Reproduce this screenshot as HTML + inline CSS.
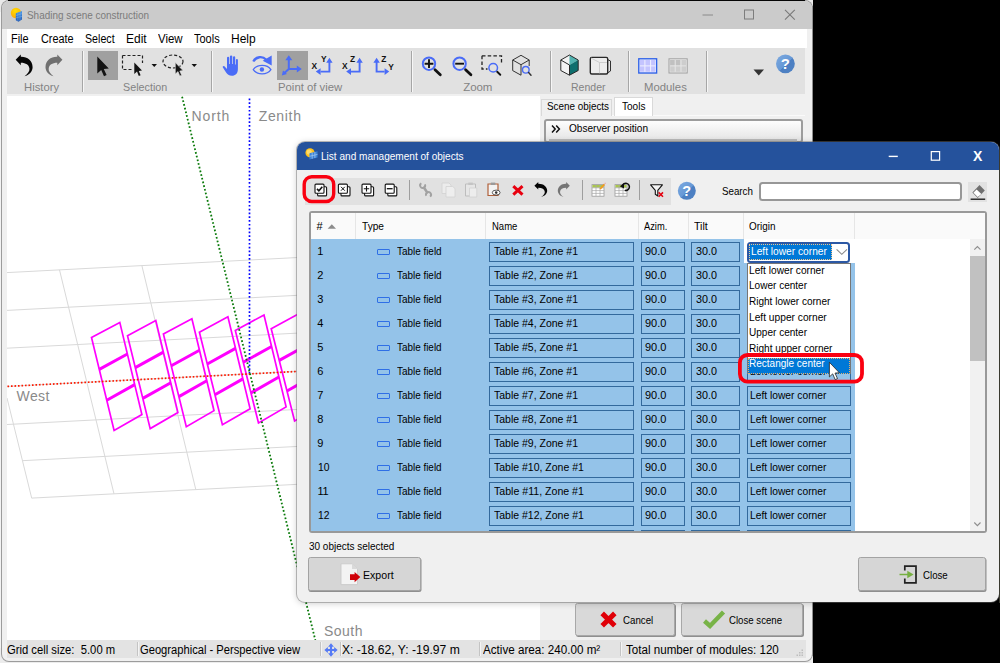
<!DOCTYPE html>
<html>
<head>
<meta charset="utf-8">
<title>Shading scene construction</title>
<style>
html,body{margin:0;padding:0;}
body{width:1000px;height:663px;overflow:hidden;position:relative;background:#000;font-family:"Liberation Sans",sans-serif;font-size:11px;color:#000;}
.abs{position:absolute;}
.t{position:absolute;white-space:pre;line-height:1;}
svg{position:absolute;overflow:visible;}
</style>
</head>
<body>
<div class="abs" style="left:0px;top:0px;width:2px;height:663px;background:#f3f3f3;"></div>
<div class="abs" style="left:0px;top:648px;width:812.5px;height:15px;background:#ececec;"></div>
<div class="abs" style="left:0px;top:0px;width:813px;height:12px;background:#e9e9e9;"></div>
<div class="abs" style="left:1.5px;top:1px;width:810.3px;height:660px;background:#f0f0f0;border-radius:7px;box-shadow:0 0 0 1px #9c9c9c;overflow:hidden;"></div>
<div class="abs" style="left:1.5px;top:1px;width:810.3px;height:28px;background:#cbcbcb;border-radius:7px 7px 0 0;"></div>
<div class="abs" style="left:8px;top:0px;width:797px;height:1.2px;background:#050505;"></div>
<div class="abs" style="left:811.6px;top:6px;width:1.4px;height:650px;background:#8f8f8f;"></div>
<svg style="left:9px;top:6px" width="16" height="17" viewBox="9 6 16 17">
<defs><radialGradient id="sun" cx="0.45" cy="0.3" r="0.75"><stop offset="0" stop-color="#ffe000"/><stop offset="1" stop-color="#ffa50a"/></radialGradient>
<linearGradient id="pan" x1="0" y1="0" x2="0" y2="1"><stop offset="0" stop-color="#4a9ae8"/><stop offset="1" stop-color="#1f55b0"/></linearGradient></defs>
<circle cx="16" cy="13" r="5.200" fill="url(#sun)"/>
<path d="M15.800 13.300 L22 10.900 V19.600 L18.500 21.700 L15.800 20.200 Z" fill="url(#pan)"/>
<path d="M15.800 15.600 L22 13.600 M15.800 17.900 L22 16.400 M17.900 12.500 V21.300 M20 11.700 V20.800" stroke="#8fc0f0" stroke-width="0.500" fill="none" opacity="0.8"/>
</svg>
<div class="t" style="left:26.5px;top:9.8px;font-size:11px;color:#7b7b7b;transform:scaleX(0.9027);transform-origin:0 0;">Shading scene construction</div>
<svg style="left:691px;top:0" width="121" height="30" viewBox="0 0 121 30">
<path d="M11.500 15 H22" stroke="#8a8a8a" stroke-width="1" fill="none"/>
<rect x="53.500" y="10" width="9" height="9" stroke="#7d7d7d" stroke-width="1" fill="none"/>
<path d="M94 9.800 L103.800 19.600 M103.800 9.800 L94 19.600" stroke="#7a7a7a" stroke-width="1.100" fill="none"/>
</svg>
<div class="abs" style="left:7px;top:29px;width:800px;height:19px;background:#fff;"></div>
<div class="t" style="left:11px;top:33px;font-size:12.5px;color:#000;transform:scaleX(0.8750);transform-origin:0 0;">File</div>
<div class="t" style="left:41px;top:33px;font-size:12.5px;color:#000;transform:scaleX(0.8696);transform-origin:0 0;">Create</div>
<div class="t" style="left:85px;top:33px;font-size:12.5px;color:#000;transform:scaleX(0.8527);transform-origin:0 0;">Select</div>
<div class="t" style="left:126px;top:33px;font-size:12.5px;color:#000;transform:scaleX(0.9575);transform-origin:0 0;">Edit</div>
<div class="t" style="left:158px;top:33px;font-size:12.5px;color:#000;transform:scaleX(0.9165);transform-origin:0 0;">View</div>
<div class="t" style="left:194px;top:33px;font-size:12.5px;color:#000;transform:scaleX(0.8781);transform-origin:0 0;">Tools</div>
<div class="t" style="left:231px;top:33px;font-size:12.5px;color:#000;transform:scaleX(0.9579);transform-origin:0 0;">Help</div>
<div class="abs" style="left:7px;top:48px;width:798px;height:46px;background:#e1e1e1;"></div>
<div class="abs" style="left:81.5px;top:51px;width:1px;height:41px;background:#a6a6a6;"></div>
<div class="abs" style="left:82.5px;top:51px;width:1px;height:41px;background:#f6f6f6;"></div>
<div class="abs" style="left:210.5px;top:51px;width:1px;height:41px;background:#a6a6a6;"></div>
<div class="abs" style="left:211.5px;top:51px;width:1px;height:41px;background:#f6f6f6;"></div>
<div class="abs" style="left:410.5px;top:51px;width:1px;height:41px;background:#a6a6a6;"></div>
<div class="abs" style="left:411.5px;top:51px;width:1px;height:41px;background:#f6f6f6;"></div>
<div class="abs" style="left:549.5px;top:51px;width:1px;height:41px;background:#a6a6a6;"></div>
<div class="abs" style="left:550.5px;top:51px;width:1px;height:41px;background:#f6f6f6;"></div>
<div class="abs" style="left:628px;top:51px;width:1px;height:41px;background:#a6a6a6;"></div>
<div class="abs" style="left:629px;top:51px;width:1px;height:41px;background:#f6f6f6;"></div>
<div class="abs" style="left:706px;top:51px;width:1px;height:41px;background:#a6a6a6;"></div>
<div class="abs" style="left:707px;top:51px;width:1px;height:41px;background:#f6f6f6;"></div>
<div class="t" style="left:23.5px;top:81.55px;font-size:11.5px;color:#838383;transform:scaleX(0.9792);transform-origin:0 0;">History</div>
<div class="t" style="left:122.8px;top:81.55px;font-size:11.5px;color:#838383;transform:scaleX(0.9350);transform-origin:0 0;">Selection</div>
<div class="t" style="left:277.6px;top:81.55px;font-size:11.5px;color:#838383;transform:scaleX(0.9852);transform-origin:0 0;">Point of view</div>
<div class="t" style="left:463.3px;top:81.55px;font-size:11.5px;color:#838383;letter-spacing:-0.099px;">Zoom</div>
<div class="t" style="left:570.5px;top:81.55px;font-size:11.5px;color:#838383;transform:scaleX(0.9156);transform-origin:0 0;">Render</div>
<div class="t" style="left:644.2px;top:81.55px;font-size:11.5px;color:#838383;transform:scaleX(0.9854);transform-origin:0 0;">Modules</div>
<div class="abs" style="left:87.5px;top:51px;width:30.5px;height:29px;background:#a0a0a0;"></div>
<div class="abs" style="left:277px;top:51px;width:30.5px;height:29px;background:#a0a0a0;"></div>
<svg style="left:1px;top:48px" width="811" height="46" viewBox="1 48 811 46">
    <!-- undo -->
    <path d="M15.700 59.800 L20.800 54.400 L20.800 56.800 C27 56.500 32.600 60.500 32.600 67.200 C32.600 71.500 29 75 24.600 76.200 C28 73.500 29.800 71 29.400 68.500 C29 65 26 62.800 20.800 62.800 L20.800 65.300 Z" fill="#050505"/>
    <!-- redo -->
    <path d="M15.700 59.800 L20.800 54.400 L20.800 56.800 C27 56.500 32.600 60.500 32.600 67.200 C32.600 71.500 29 75 24.600 76.200 C28 73.500 29.800 71 29.400 68.500 C29 65 26 62.800 20.800 62.800 L20.800 65.300 Z" fill="#707070" transform="translate(78.100 0) scale(-1 1)"/>
    <!-- arrow cursor -->
    <path d="M97.3 56.5 L97.3 73.5 L101.2 70 L104 76.3 L106.6 75.1 L103.8 69 L108.8 68.6 Z" fill="#141414"/>
    <!-- rect select -->
    <path d="M122.5 55.5 H142.5 V63 M122.5 55.5 V69.5 H133" stroke="#222" stroke-width="1.2" stroke-dasharray="3 2" fill="none"/>
    <path d="M134.3 62.5 L134.3 74 L137 71.6 L138.8 76 L140.6 75.2 L138.8 71 L142 70.6 Z" fill="#141414"/>
    <path d="M151.5 64 H157 L154.25 67 Z" fill="#111"/>
    <!-- lasso -->
    <ellipse cx="173" cy="61.5" rx="10" ry="6.5" stroke="#222" stroke-width="1.2" stroke-dasharray="3 2" fill="none"/>
    <rect x="172" y="62" width="12" height="14" fill="#e1e1e1" opacity="0"/>
    <path d="M175.3 62.5 L175.3 74 L178 71.6 L179.8 76 L181.6 75.2 L179.8 71 L183 70.6 Z" fill="#141414" stroke="#e1e1e1" stroke-width="0.6"/>
    <path d="M191.5 64 H197 L194.25 67 Z" fill="#111"/>
    <!-- hand -->
    <path d="M227 57.900 a1.100 1.100 0 0 1 2.200 0 V64 h0.700 V56.600 a1.200 1.200 0 0 1 2.400 0 V64 h0.700 V57.300 a1.100 1.100 0 0 1 2.200 0 V64.500 h0.700 V60 a1 1 0 0 1 2 0 V69 c0 4.500 -2.500 6.800 -6 6.800 c-3 0 -4.600 -1.400 -5.800 -3.200 l-3.200 -5 c-0.700 -1.200 0.700 -2.200 1.700 -1.200 l2.400 2.600 Z" fill="#4a6cf7"/>
    <!-- eye -->
    <path d="M253.300 69.600 C257 64 267.200 64 270.900 69.600 C267.200 75.200 257 75.200 253.300 69.600 Z" fill="none" stroke="#4a6cf7" stroke-width="1.300"/>
    <circle cx="261.900" cy="69.500" r="2.200" fill="#4a6cf7"/>
    <path d="M253.300 61.500 C256 56.500 262.500 55.800 266 59.500" fill="none" stroke="#4a6cf7" stroke-width="2.300"/>
    <path d="M271.700 55.400 L271.700 65.600 L262.700 60.800 Z" fill="#4a6cf7"/>
    <!-- 3-axes -->
    <path d="M288.800 58.500 V69 H298 M288.800 69 L283.800 73.600" stroke="#4a6cf7" stroke-width="2" fill="none"/>
    <path d="M288.800 55.200 L292.300 60.200 H285.300 Z M301.800 69 L296.800 65.500 V72.500 Z M281.800 75.400 L283 70.400 L287 74.100 Z" fill="#4a6cf7"/>
    <!-- xY -->
    <path d="M329.4 62 V71.600 H320.6" stroke="#4a6cf7" stroke-width="1.900" fill="none"/>
    <path d="M329.4 57.800 L332.59999999999997 62.800 H326.2 Z M315.8 71.600 L320.6 68.300 V74.900 Z" fill="#4a6cf7"/>
    <text x="311.4" y="68.7" font-family="Liberation Sans" font-weight="bold" font-size="8.400" fill="#111">X</text>
    <text x="320.9" y="61.5" font-family="Liberation Sans" font-weight="bold" font-size="8.400" fill="#111">Y</text>
    <!-- xZ -->
    <path d="M359.6 62 V71.600 H351" stroke="#4a6cf7" stroke-width="1.900" fill="none"/>
    <path d="M359.6 57.800 L362.8 62.800 H356.40000000000003 Z M346.2 71.600 L351 68.300 V74.900 Z" fill="#4a6cf7"/>
    <text x="342" y="68.7" font-family="Liberation Sans" font-weight="bold" font-size="8.400" fill="#111">X</text>
    <text x="349.9" y="61.5" font-family="Liberation Sans" font-weight="bold" font-size="8.400" fill="#111">Z</text>
    <!-- ZY -->
    <path d="M376.6 62 V71.600 H384.6" stroke="#4a6cf7" stroke-width="1.900" fill="none"/>
    <path d="M376.6 57.800 L379.8 62.800 H373.40000000000003 Z M389.2 71.600 L384.6 68.300 V74.900 Z" fill="#4a6cf7"/>
    <text x="381.2" y="61.5" font-family="Liberation Sans" font-weight="bold" font-size="8.400" fill="#111">Z</text>
    <text x="388.2" y="69.5" font-family="Liberation Sans" font-weight="bold" font-size="8.400" fill="#111">Y</text>
    <!-- zoom in -->
    <circle cx="429" cy="63.700" r="6.200" fill="none" stroke="#4a6cf7" stroke-width="2"/>
    <path d="M424.600 63.700 H433.400 M429 59.300 V68.100" stroke="#111" stroke-width="1.900"/>
    <path d="M435 69.800 L440.300 74.800" stroke="#111" stroke-width="2.800" stroke-linecap="round"/>
    <!-- zoom out -->
    <circle cx="459.600" cy="63.700" r="6.200" fill="none" stroke="#4a6cf7" stroke-width="2"/>
    <path d="M455.200 63.700 H464" stroke="#111" stroke-width="1.900"/>
    <path d="M465.600 69.800 L470.900 74.800" stroke="#111" stroke-width="2.800" stroke-linecap="round"/>
    <!-- zoom rect -->
    <path d="M482 55.800 H501.500 V64 M482 55.800 V69 H487.500" stroke="#222" stroke-width="1.300" stroke-dasharray="3.500 2.200" fill="none"/>
    <circle cx="493.200" cy="67.800" r="4.300" fill="#e1e1e1" stroke="#4a6cf7" stroke-width="1.500"/>
    <path d="M497.200 71.800 L500.300 74.800" stroke="#111" stroke-width="1.900" stroke-linecap="round"/>
    <!-- zoom cube -->
    <path d="M512.700 60 L521 55.300 L529.200 60 V66 M512.700 60 V70.600 L521 75.200 V64.700 L512.700 60 M521 64.700 L529.200 60" stroke="#333" stroke-width="1" fill="none"/>
    <circle cx="525.800" cy="69.800" r="3.300" fill="#e1e1e1" stroke="#4a6cf7" stroke-width="1.400"/>
    <path d="M528.600 72.600 L531 75.200" stroke="#333" stroke-width="1.500" stroke-linecap="round"/>
    <!-- render cube -->
    <path d="M569.500 55 L560.800 60 V70.500 L569.500 75.200 Z" fill="#f3f3f3"/>
    <path d="M569.500 55 L578.200 60 L569.500 65 Z" fill="#52b3b0"/>
    <path d="M569.500 65 L578.200 60 V70.500 L569.500 75.200 Z" fill="#0e6f6e"/>
    <path d="M569.500 55 L578.200 60 V70.500 L569.500 75.200 L560.800 70.500 V60 Z M560.800 60 L569.500 65 V75.200" stroke="#2a2a2a" stroke-width="1" fill="none" stroke-linejoin="round"/>
    <!-- wire box -->
    <path d="M607.500 59.500 L610.500 61 V71 L607.500 73" fill="#e4e4e4" stroke="#333" stroke-width="1"/>
    <rect x="590.300" y="57.400" width="17.400" height="16.600" rx="1.500" fill="#ededed" stroke="#2a2a2a" stroke-width="1.400"/>
    <path d="M591 58 L599.500 62.500 V73.300 M599.500 62.500 H607" stroke="#c9c9c9" stroke-width="0.900" fill="none"/>
    <!-- modules -->
    <rect x="638.800" y="58.800" width="17.800" height="14.200" fill="#fff" stroke="#2f62e8" stroke-width="1.400"/>
    <rect x="640" y="60" width="15.400" height="11.800" fill="#c4c4ff"/>
    <path d="M644.900 60 V71.800 M650.600 60 V71.800 M640 65.900 H655.400" stroke="#f0f0ff" stroke-width="1"/>
    <rect x="669" y="58.800" width="18.200" height="14.200" fill="#ebebeb" stroke="#a0a0a0" stroke-width="1"/>
    <rect x="670.200" y="60" width="15.800" height="11.800" fill="#cdcdcd"/>
    <rect x="670.200" y="60" width="10" height="5.400" fill="#c0c0c0"/>
    <path d="M675.200 60 V71.800 M681 60 V71.800 M670.200 65.900 H686" stroke="#e6e6e6" stroke-width="1"/>
    <!-- dropdown -->
    <path d="M753.500 69.500 H764 L758.750 75.500 Z" fill="#333"/>
    <!-- help -->
    <defs><linearGradient id="hg" x1="0" y1="0" x2="1" y2="1"><stop offset="0" stop-color="#7daae0"/><stop offset="0.520" stop-color="#6698d6"/><stop offset="0.550" stop-color="#4c7fc2"/><stop offset="1" stop-color="#4f82c4"/></linearGradient></defs>
    <circle cx="785.400" cy="63.800" r="9.400" fill="url(#hg)"/>
    <text x="785.400" y="69.300" text-anchor="middle" font-family="Liberation Sans" font-weight="bold" font-size="15" fill="#fff">?</text>
</svg>
<div class="abs" style="left:7px;top:96px;width:533px;height:544px;background:#fff;"></div>
<svg style="left:0;top:0" width="1000" height="663" viewBox="0 0 1000 663"><defs><clipPath id="vclip"><rect x="7" y="96" width="533" height="544"/></clipPath></defs><g clip-path="url(#vclip)"><path d="M7.0 272.6 L300 257.4 M7.0 310.4 L300 295.2 M7.0 348.2 L300 333.0 M7.0 386.4 L300 371.2 M7.0 424.5 L300 409.3 M22.2 460.7 L300 446.3 M31.7 498.1 L300 484.2 M7 398 L31.7 498.1 M59.5 269.9 L114 493.9 M141.9 265.7 L195.8 489.6" stroke="#d9d9d9" stroke-width="1" fill="none"/><path d="M91.5 337.5 L119.8 322.4 L141.9 414.5 L114.1 430.5 Z M127.5 335.8 L155.8 320.5 L177.9 412.6 L150.2 428.6 Z M163.4 334.0 L191.9 318.7 L214.0 410.7 L186.3 426.7 Z M199.4 332.2 L227.9 316.8 L250.1 408.8 L222.4 424.8 Z M235.3 330.5 L264.0 315.0 L286.1 406.9 L258.5 422.9 Z M271.2 328.8 L300.1 313.1 L322.1 405.0 L294.6 421.0 Z M307.2 327.0 L336.1 311.3 L358.2 403.1 L330.7 419.1 Z" stroke="#ff00ff" stroke-width="1.7" fill="none" stroke-linejoin="miter"/><path d="M99.3 369.4 L127.4 354.0 M106.8 400.3 L134.7 384.6 M135.3 367.6 L163.4 352.1 M142.8 398.4 L170.8 382.7 M171.3 365.8 L199.5 350.3 M178.9 396.6 L206.8 380.8 M207.3 364.0 L235.5 348.4 M214.9 394.7 L242.9 378.9 M243.3 362.2 L271.6 346.5 M251.0 392.9 L278.9 377.0 M279.3 360.4 L307.6 344.7 M287.0 391.0 L315.0 375.1 M315.3 358.6 L343.7 342.8 M323.1 389.2 L351.0 373.3" stroke="#ff00ff" stroke-width="3" fill="none"/><path d="M7.5 386.4 L300 371.3" stroke="#ff1a00" stroke-width="1.7" stroke-dasharray="1.6 1.9" fill="none"/><path d="M249.5 98.5 V373" stroke="#0000ff" stroke-width="1.7" stroke-dasharray="1.7 2.1" fill="none"/><path d="M182.1 96.7 L316.5 645" stroke="#0a7a0a" stroke-width="1.8" stroke-dasharray="1.7 2.1" fill="none"/></g></svg>
<div class="t" style="left:191.6px;top:109.3px;font-size:14px;color:#8a8a8a;letter-spacing:0.893px;">North</div>
<div class="t" style="left:258.7px;top:109.3px;font-size:14px;color:#8a8a8a;letter-spacing:0.665px;">Zenith</div>
<div class="t" style="left:16.6px;top:389.3px;font-size:14px;color:#8a8a8a;letter-spacing:0.391px;">West</div>
<div class="t" style="left:324px;top:624.3px;font-size:14px;color:#8a8a8a;letter-spacing:0.463px;">South</div>
<div class="abs" style="left:540px;top:96px;width:265px;height:544px;background:#f0f0f0;"></div>
<div class="abs" style="left:541px;top:115px;width:264px;height:1px;background:#fafafa;"></div>
<div class="abs" style="left:541px;top:99px;width:71px;height:17px;background:#f0f0f0;border:1px solid #d9d9d9;border-bottom:none;box-sizing:border-box;"></div>
<div class="t" style="left:546.8px;top:100.55px;font-size:11.5px;color:#000;transform:scaleX(0.8587);transform-origin:0 0;">Scene objects</div>
<div class="abs" style="left:614px;top:97px;width:38.5px;height:19px;background:#fff;border:1px solid #d9d9d9;border-bottom:none;box-sizing:border-box;"></div>
<div class="t" style="left:621.8px;top:100.55px;font-size:11.5px;color:#000;transform:scaleX(0.8729);transform-origin:0 0;">Tools</div>
<div class="abs" style="left:543.5px;top:119px;width:259px;height:24px;background:linear-gradient(#fdfdfd,#e4e4e4);border:2px solid #9c9c9c;border-radius:3px;box-sizing:border-box;"></div>
<div class="abs" style="left:549px;top:139px;width:248px;height:3px;background:#b9b9b9;"></div>
<svg style="left:551px;top:124px" width="10" height="10" viewBox="0 0 10 10"><path d="M1 1.500 L4.200 5 L1 8.500 M5.200 1.500 L8.400 5 L5.200 8.500" stroke="#111" stroke-width="1.5" fill="none"/></svg>
<div class="t" style="left:568.6px;top:122.55px;font-size:11.5px;color:#000;transform:scaleX(0.8769);transform-origin:0 0;">Observer position</div>
<div class="abs" style="left:575px;top:603px;width:99.5px;height:32.5px;background:#d9d9d9;border:1px solid #a8a8a8;border-radius:2.5px;box-sizing:border-box;box-shadow:1px 1px 0 #8f8f8f;"></div>
<svg style="left:600px;top:611px" width="17" height="17" viewBox="0 0 17 17"><path d="M2.200 2.400 L14.800 14.800 M14.800 2.400 L2.200 14.800" stroke="#e00008" stroke-width="5" fill="none"/></svg>
<div class="t" style="left:622.9px;top:614.55px;font-size:11.5px;color:#000;transform:scaleX(0.8446);transform-origin:0 0;">Cancel</div>
<div class="abs" style="left:680.5px;top:603px;width:122px;height:32.5px;background:#d9d9d9;border:1px solid #a8a8a8;border-radius:2.5px;box-sizing:border-box;box-shadow:1px 1px 0 #8f8f8f;"></div>
<svg style="left:703px;top:610px" width="23" height="19" viewBox="0 0 23 19"><path d="M1.500 11 L7 16 L20.500 2" stroke="#78b347" stroke-width="4.400" fill="none"/></svg>
<div class="t" style="left:729.1px;top:614.55px;font-size:11.5px;color:#000;transform:scaleX(0.8380);transform-origin:0 0;">Close scene</div>
<div class="abs" style="left:7px;top:640px;width:799px;height:17.5px;background:#e3e3e3;"></div>
<div class="abs" style="left:136.5px;top:642px;width:1px;height:14px;background:#c4c4c4;"></div>
<div class="abs" style="left:137.5px;top:642px;width:1px;height:14px;background:#f4f4f4;"></div>
<div class="abs" style="left:319.5px;top:642px;width:1px;height:14px;background:#c4c4c4;"></div>
<div class="abs" style="left:320.5px;top:642px;width:1px;height:14px;background:#f4f4f4;"></div>
<div class="abs" style="left:339.5px;top:642px;width:1px;height:14px;background:#c4c4c4;"></div>
<div class="abs" style="left:340.5px;top:642px;width:1px;height:14px;background:#f4f4f4;"></div>
<div class="abs" style="left:479px;top:642px;width:1px;height:14px;background:#c4c4c4;"></div>
<div class="abs" style="left:480px;top:642px;width:1px;height:14px;background:#f4f4f4;"></div>
<div class="abs" style="left:620px;top:642px;width:1px;height:14px;background:#c4c4c4;"></div>
<div class="abs" style="left:621px;top:642px;width:1px;height:14px;background:#f4f4f4;"></div>
<div class="t" style="left:7.3px;top:644.05px;font-size:12.5px;color:#000;transform:scaleX(0.8997);transform-origin:0 0;">Grid cell size:  5.00 m</div>
<div class="t" style="left:140.2px;top:644.05px;font-size:12.5px;color:#000;transform:scaleX(0.8933);transform-origin:0 0;">Geographical - Perspective view</div>
<svg style="left:323.5px;top:642.5px" width="14" height="14" viewBox="0 0 12 12"><path d="M6 0.300 L8.500 3.300 H6.900 V5.100 H8.700 V3.500 L11.700 6 L8.700 8.500 V6.900 H6.900 V8.700 H8.500 L6 11.700 L3.500 8.700 H5.100 V6.900 H3.300 V8.500 L0.300 6 L3.300 3.500 V5.100 H5.100 V3.300 H3.500 Z" fill="#557af5"/></svg>
<div class="t" style="left:342.4px;top:644.05px;font-size:12.5px;color:#000;transform:scaleX(0.9700);transform-origin:0 0;">X: -18.62, Y: -19.97 m</div>
<div class="t" style="left:483.3px;top:644.05px;font-size:12.5px;color:#000;transform:scaleX(0.9322);transform-origin:0 0;">Active area: 240.00 m²</div>
<div class="t" style="left:625.9px;top:644.05px;font-size:12.5px;color:#000;transform:scaleX(0.9280);transform-origin:0 0;">Total number of modules: 120</div>
<svg style="left:796px;top:649px" width="8" height="8" viewBox="0 0 8 8"><path d="M5.500 0.500h1.500v1.500h-1.500z M5.500 3h1.500v1.500h-1.500z M3 3h1.500v1.500h-1.500z M5.500 5.500h1.500v1.500h-1.500z M3 5.500h1.500v1.500h-1.500z M0.500 5.500h1.500v1.500h-1.500z" fill="#bdbdbd"/></svg>
<div class="abs" style="left:296.5px;top:141.5px;width:702.0px;height:460.79999999999995px;background:#f0f0f0;border-radius:8px;box-shadow:0 0 0 1px rgba(110,110,110,.45),0 1px 7px rgba(0,0,0,.22);overflow:hidden;"></div>
<div class="abs" style="left:296.5px;top:141.5px;width:702.0px;height:28px;background:#25529c;border-radius:8px 8px 0 0;"></div>
<div class="abs" style="left:999.3px;top:150px;width:1px;height:453px;background:#3a3a30;"></div>
<svg style="left:304.5px;top:148px" width="13" height="12" viewBox="0 0 13 12">
<circle cx="5" cy="4.800" r="4.600" fill="#ffc21a"/><circle cx="4.200" cy="4" r="2.600" fill="#ffdc6a"/>
<path d="M4.500 5.200 L12.500 3.300 V9.500 L4.500 11.400 Z" fill="#3b82d6"/>
<path d="M4.500 8.300 L12.500 6.400 M7.200 4.600 V10.800 M9.900 3.900 V10.100" stroke="#a9cdf3" stroke-width="0.7" fill="none"/>
</svg>
<div class="t" style="left:320.9px;top:150.55px;font-size:11.5px;color:#fff;transform:scaleX(0.8744);transform-origin:0 0;">List and management of objects</div>
<svg style="left:880px;top:142px" width="118" height="28" viewBox="880 142 118 28">
<path d="M888.700 156.400 H897.800" stroke="#fff" stroke-width="1.4" fill="none"/>
<rect x="931.300" y="151.600" width="8.300" height="8.600" stroke="#fff" stroke-width="1.200" fill="none"/>
</svg>
<div class="t" style="left:973.1px;top:149.3px;font-size:14px;color:#fff;letter-spacing:0.562px;font-weight:bold;">X</div>
<div class="abs" style="left:305px;top:178px;width:365.5px;height:26.5px;background:#e1e1e1;"></div>
<div class="abs" style="left:408.5px;top:180px;width:1.3px;height:19.5px;background:#9e9e9e;"></div>
<div class="abs" style="left:581.5px;top:180px;width:1.3px;height:19.5px;background:#9e9e9e;"></div>
<div class="abs" style="left:639.2px;top:180px;width:1.3px;height:19.5px;background:#9e9e9e;"></div>
<svg style="left:300px;top:172px" width="400" height="36" viewBox="300 172 400 36">
<!-- stacked box icons -->
<g fill="#fff" stroke="#111" stroke-width="1.100">
<rect x="317.600" y="186.700" width="9" height="9.200" rx="1"/><rect x="315" y="184.100" width="9" height="9.200" rx="1"/>
<rect x="341" y="186.700" width="9" height="9.200" rx="1"/><rect x="338.400" y="184.100" width="9" height="9.200" rx="1"/>
<rect x="364.600" y="186.700" width="9" height="9.200" rx="1"/><rect x="362" y="184.100" width="9" height="9.200" rx="1"/>
<rect x="387.800" y="186.700" width="9" height="9.200" rx="1"/><rect x="385.200" y="184.100" width="9" height="9.200" rx="1"/>
</g>
<path d="M317 188.900 L318.900 190.800 L322.300 186.800" stroke="#111" stroke-width="1.600" fill="none"/>
<path d="M341 186.800 L344.800 190.700 M344.800 186.800 L341 190.700" stroke="#111" stroke-width="1" fill="none"/>
<path d="M363.800 188.700 H369.200 M366.500 186 V191.500" stroke="#111" stroke-width="1.100" fill="none"/>
<path d="M386.800 188.700 H392.600" stroke="#111" stroke-width="1.300" fill="none"/>
<!-- wrench (disabled) -->
<path d="M423.400 186.800 L427.800 193.400" stroke="#a2a2a2" stroke-width="2.600" fill="none"/>
<path d="M421.300 183.300 A2.500 2.500 0 1 0 424.900 184.400" stroke="#a2a2a2" stroke-width="1.900" fill="none"/>
<path d="M430 196.600 A2.500 2.500 0 1 0 426.300 195.700" stroke="#a2a2a2" stroke-width="1.900" fill="none"/>
<!-- copy (disabled) -->
<path d="M442 183 H449 L451 185 V193.500 H442 Z" fill="#ececec" stroke="#d2d2d2" stroke-width="0.800"/>
<path d="M446 186.500 H452.800 L455 188.700 V197 H446 Z" fill="#eeeeee" stroke="#d2d2d2" stroke-width="0.800"/>
<!-- paste (disabled) -->
<path d="M465.500 184 H475.500 V196 H465.500 Z" fill="#e6e6e6" stroke="#bdbdbd" stroke-width="1"/>
<rect x="468.300" y="182.600" width="4.500" height="2.400" fill="#c4c4c4"/>
<path d="M469.500 188 H476.800 V197 H469.500 Z" fill="#ededed" stroke="#cfcfcf" stroke-width="0.700"/>
<!-- paste special -->
<path d="M488 184 H498 V195.500 H488 Z" fill="#f3f3f3" stroke="#b0603a" stroke-width="1.200"/>
<rect x="490.800" y="182.600" width="4.500" height="2.400" fill="#9a9a9a"/>
<ellipse cx="496.200" cy="192.600" rx="3.900" ry="2.500" fill="#fff" stroke="#444" stroke-width="0.900"/>
<circle cx="496.200" cy="192.600" r="1.300" fill="#333"/>
<!-- red x -->
<path d="M513.300 186.200 L522.500 194.700 M522.500 186.200 L513.300 194.700" stroke="#e8000f" stroke-width="3" fill="none"/>
<!-- undo -->
<path d="M15.700 59.800 L20.800 54.400 L20.800 56.800 C27 56.500 32.600 60.500 32.600 67.200 C32.600 71.500 29 75 24.600 76.200 C28 73.500 29.800 71 29.400 68.500 C29 65 26 62.800 20.800 62.800 L20.800 65.300 Z" fill="#050505" transform="translate(522.509 144.569) scale(0.7574 0.6881)"/>
<!-- redo -->
<path d="M15.700 59.800 L20.800 54.400 L20.800 56.800 C27 56.500 32.600 60.500 32.600 67.200 C32.600 71.500 29 75 24.600 76.200 C28 73.500 29.800 71 29.400 68.500 C29 65 26 62.800 20.800 62.800 L20.800 65.300 Z" fill="#757575" transform="translate(580.948 144.569) scale(-0.7101 0.6881)"/>
<!-- table edit -->
<rect x="592" y="184.600" width="12" height="11.600" fill="#fff" stroke="#9a9a9a" stroke-width="0.800"/>
<rect x="592.400" y="185" width="11.200" height="2.600" fill="#a9c64c"/>
<path d="M592 187.800 H604 M592 190.600 H604 M592 193.400 H604 M596 185 V196 M600 185 V196" stroke="#a6a6a6" stroke-width="0.700" fill="none"/>
<path d="M599.500 188.500 L603.800 183.800 L605 185 L600.800 189.600 Z" fill="#f39a1e"/>
<path d="M604.300 183.200 L605.300 182.600 L605.600 184.200 Z" fill="#f08080"/>
<!-- table refresh -->
<rect x="615" y="184.600" width="12" height="11.600" fill="#fff" stroke="#9a9a9a" stroke-width="0.800"/>
<rect x="615.400" y="185" width="11.200" height="2.600" fill="#a9c64c"/>
<path d="M615 187.800 H627 M615 190.600 H627 M615 193.400 H627 M619 185 V196 M623 185 V196" stroke="#a6a6a6" stroke-width="0.700" fill="none"/>
<path d="M622.300 186 A3.600 3.600 0 1 1 624.800 190.300" stroke="#111" stroke-width="1.500" fill="none"/>
<path d="M619.800 186.300 L624 183.600 L624 188.600 Z" fill="#111"/>
<!-- filter -->
<path d="M650.600 184.800 H662.400 L657.800 190.400 V196 L655.300 194.300 V190.400 Z" fill="#f4f4f4" stroke="#111" stroke-width="1.100" stroke-linejoin="round"/>
<path d="M658.600 192.400 L663 196.800 M663 192.400 L658.600 196.800" stroke="#e3000f" stroke-width="1.500" fill="none"/>
<!-- help -->
<defs><linearGradient id="hg2" x1="0" y1="0" x2="1" y2="1"><stop offset="0" stop-color="#7daae0"/><stop offset="0.520" stop-color="#6698d6"/><stop offset="0.550" stop-color="#4c7fc2"/><stop offset="1" stop-color="#4f82c4"/></linearGradient></defs>
<circle cx="686.800" cy="190.800" r="9" fill="url(#hg2)"/>
<text x="686.800" y="196" text-anchor="middle" font-family="Liberation Sans" font-weight="bold" font-size="14.500" fill="#fff">?</text>
</svg>
<svg style="left:300px;top:172px" width="40" height="36" viewBox="300 172 40 36"><rect x="304.200" y="176.700" width="29.500" height="24.800" rx="7.500" ry="7.500" fill="none" stroke="#fa0010" stroke-width="3.400"/></svg>
<div class="t" style="left:721.7px;top:185.55px;font-size:11.5px;color:#000;transform:scaleX(0.8490);transform-origin:0 0;">Search</div>
<div class="abs" style="left:758.8px;top:181.8px;width:202.9px;height:19px;background:#fff;border:2px solid #979797;border-radius:3.5px;box-sizing:border-box;"></div>
<div class="abs" style="left:968.2px;top:181.8px;width:18.8px;height:20.6px;background:#e2e2e2;"></div>
<svg style="left:968px;top:181px" width="20" height="22" viewBox="968 181 20 22">
<path d="M979.500 185 L984.800 190.400 L977.700 197.900 L972.400 192.600 Z" fill="#707070"/>
<path d="M976.600 189.400 L981.400 194.100 L977.700 196.900 L973.400 192.700 Z" fill="#fff"/>
<path d="M970.600 199.200 H985.200" stroke="#111" stroke-width="1.300"/>
</svg>
<div class="abs" style="left:309px;top:210.7px;width:677.7px;height:322.09999999999997px;background:#fff;border:2px solid #999;border-radius:3px;box-sizing:border-box;"></div>
<div class="abs" style="left:311px;top:212.7px;width:674px;height:26.700000000000017px;background:#fafafa;"></div>
<div class="abs" style="left:355px;top:212.7px;width:1px;height:26.700000000000017px;background:#e6e6e6;"></div>
<div class="abs" style="left:485.2px;top:212.7px;width:1px;height:26.700000000000017px;background:#e6e6e6;"></div>
<div class="abs" style="left:637.6px;top:212.7px;width:1px;height:26.700000000000017px;background:#e6e6e6;"></div>
<div class="abs" style="left:688px;top:212.7px;width:1px;height:26.700000000000017px;background:#e6e6e6;"></div>
<div class="abs" style="left:743.3px;top:212.7px;width:1px;height:26.700000000000017px;background:#e6e6e6;"></div>
<div class="abs" style="left:854px;top:212.7px;width:1px;height:26.700000000000017px;background:#e6e6e6;"></div>
<div class="t" style="left:316.6px;top:220.8px;font-size:11px;color:#000;letter-spacing:-0.618px;">#</div>
<svg style="left:327px;top:223px" width="10" height="7" viewBox="0 0 10 7"><path d="M0.600 5.800 L4.800 1.300 L9 5.800 Z" fill="#8c8c8c"/></svg>
<div class="t" style="left:362px;top:220.8px;font-size:11px;color:#000;transform:scaleX(0.9221);transform-origin:0 0;">Type</div>
<div class="t" style="left:491.6px;top:220.8px;font-size:11px;color:#000;transform:scaleX(0.8653);transform-origin:0 0;">Name</div>
<div class="t" style="left:643.7px;top:220.8px;font-size:11px;color:#000;transform:scaleX(0.8469);transform-origin:0 0;">Azim.</div>
<div class="t" style="left:694px;top:220.8px;font-size:11px;color:#000;transform:scaleX(0.9674);transform-origin:0 0;">Tilt</div>
<div class="t" style="left:749.3px;top:220.8px;font-size:11px;color:#000;transform:scaleX(0.8994);transform-origin:0 0;">Origin</div>
<div class="abs" style="left:311px;top:239px;width:674px;height:291.79999999999995px;overflow:hidden;">
<div class="abs" style="left:0px;top:0.4px;width:543.6px;height:312px;background:#94c3e9;"></div>
<div class="abs" style="left:432.9px;top:0px;width:112px;height:24.4px;background:#fff;"></div>
<div class="t" style="left:6.199999999999989px;top:6.8px;font-size:11px;color:#000;">1</div>
<div class="abs" style="left:66.39999999999998px;top:10.200000000000001px;width:13px;height:6.2px;background:transparent;border:1.5px solid #2f6fe6;border-radius:1px;box-sizing:border-box;"></div>
<div class="t" style="left:86.39999999999998px;top:6.8px;font-size:11px;color:#000;transform:scaleX(0.9002);transform-origin:0 0;">Table field</div>
<div class="abs" style="left:178px;top:2.6px;width:145.39999999999998px;height:20px;background:transparent;border:1.5px solid #33699c;box-sizing:border-box;"></div>
<div class="t" style="left:182.60000000000002px;top:6.8px;font-size:11px;color:#000;transform:scaleX(0.9537);transform-origin:0 0;">Table #1, Zone #1</div>
<div class="abs" style="left:329.79999999999995px;top:2.6px;width:43.90000000000009px;height:20px;background:transparent;border:1.5px solid #33699c;box-sizing:border-box;"></div>
<div class="t" style="left:333.9px;top:6.8px;font-size:11px;color:#000;transform:scaleX(0.9991);transform-origin:0 0;">90.0</div>
<div class="abs" style="left:380.20000000000005px;top:2.6px;width:49.19999999999993px;height:20px;background:transparent;border:1.5px solid #33699c;box-sizing:border-box;"></div>
<div class="t" style="left:385px;top:6.8px;font-size:11px;color:#000;transform:scaleX(0.9804);transform-origin:0 0;">30.0</div>
<div class="t" style="left:6.199999999999989px;top:30.8px;font-size:11px;color:#000;">2</div>
<div class="abs" style="left:66.39999999999998px;top:34.2px;width:13px;height:6.2px;background:transparent;border:1.5px solid #2f6fe6;border-radius:1px;box-sizing:border-box;"></div>
<div class="t" style="left:86.39999999999998px;top:30.8px;font-size:11px;color:#000;transform:scaleX(0.9002);transform-origin:0 0;">Table field</div>
<div class="abs" style="left:178px;top:26.599999999999998px;width:145.39999999999998px;height:20px;background:transparent;border:1.5px solid #33699c;box-sizing:border-box;"></div>
<div class="t" style="left:182.60000000000002px;top:30.8px;font-size:11px;color:#000;transform:scaleX(0.9537);transform-origin:0 0;">Table #2, Zone #1</div>
<div class="abs" style="left:329.79999999999995px;top:26.599999999999998px;width:43.90000000000009px;height:20px;background:transparent;border:1.5px solid #33699c;box-sizing:border-box;"></div>
<div class="t" style="left:333.9px;top:30.8px;font-size:11px;color:#000;transform:scaleX(0.9991);transform-origin:0 0;">90.0</div>
<div class="abs" style="left:380.20000000000005px;top:26.599999999999998px;width:49.19999999999993px;height:20px;background:transparent;border:1.5px solid #33699c;box-sizing:border-box;"></div>
<div class="t" style="left:385px;top:30.8px;font-size:11px;color:#000;transform:scaleX(0.9804);transform-origin:0 0;">30.0</div>
<div class="abs" style="left:435.9px;top:26.599999999999998px;width:104.0px;height:20px;background:transparent;border:1.5px solid #33699c;box-sizing:border-box;"></div>
<div class="t" style="left:439.20000000000005px;top:30.8px;font-size:11px;color:#000;transform:scaleX(0.9324);transform-origin:0 0;">Left lower corner</div>
<div class="t" style="left:6.199999999999989px;top:54.8px;font-size:11px;color:#000;">3</div>
<div class="abs" style="left:66.39999999999998px;top:58.2px;width:13px;height:6.2px;background:transparent;border:1.5px solid #2f6fe6;border-radius:1px;box-sizing:border-box;"></div>
<div class="t" style="left:86.39999999999998px;top:54.8px;font-size:11px;color:#000;transform:scaleX(0.9002);transform-origin:0 0;">Table field</div>
<div class="abs" style="left:178px;top:50.6px;width:145.39999999999998px;height:20px;background:transparent;border:1.5px solid #33699c;box-sizing:border-box;"></div>
<div class="t" style="left:182.60000000000002px;top:54.8px;font-size:11px;color:#000;transform:scaleX(0.9537);transform-origin:0 0;">Table #3, Zone #1</div>
<div class="abs" style="left:329.79999999999995px;top:50.6px;width:43.90000000000009px;height:20px;background:transparent;border:1.5px solid #33699c;box-sizing:border-box;"></div>
<div class="t" style="left:333.9px;top:54.8px;font-size:11px;color:#000;transform:scaleX(0.9991);transform-origin:0 0;">90.0</div>
<div class="abs" style="left:380.20000000000005px;top:50.6px;width:49.19999999999993px;height:20px;background:transparent;border:1.5px solid #33699c;box-sizing:border-box;"></div>
<div class="t" style="left:385px;top:54.8px;font-size:11px;color:#000;transform:scaleX(0.9804);transform-origin:0 0;">30.0</div>
<div class="abs" style="left:435.9px;top:50.6px;width:104.0px;height:20px;background:transparent;border:1.5px solid #33699c;box-sizing:border-box;"></div>
<div class="t" style="left:439.20000000000005px;top:54.8px;font-size:11px;color:#000;transform:scaleX(0.9324);transform-origin:0 0;">Left lower corner</div>
<div class="t" style="left:6.199999999999989px;top:78.8px;font-size:11px;color:#000;">4</div>
<div class="abs" style="left:66.39999999999998px;top:82.2px;width:13px;height:6.2px;background:transparent;border:1.5px solid #2f6fe6;border-radius:1px;box-sizing:border-box;"></div>
<div class="t" style="left:86.39999999999998px;top:78.8px;font-size:11px;color:#000;transform:scaleX(0.9002);transform-origin:0 0;">Table field</div>
<div class="abs" style="left:178px;top:74.60000000000001px;width:145.39999999999998px;height:20px;background:transparent;border:1.5px solid #33699c;box-sizing:border-box;"></div>
<div class="t" style="left:182.60000000000002px;top:78.8px;font-size:11px;color:#000;transform:scaleX(0.9537);transform-origin:0 0;">Table #4, Zone #1</div>
<div class="abs" style="left:329.79999999999995px;top:74.60000000000001px;width:43.90000000000009px;height:20px;background:transparent;border:1.5px solid #33699c;box-sizing:border-box;"></div>
<div class="t" style="left:333.9px;top:78.8px;font-size:11px;color:#000;transform:scaleX(0.9991);transform-origin:0 0;">90.0</div>
<div class="abs" style="left:380.20000000000005px;top:74.60000000000001px;width:49.19999999999993px;height:20px;background:transparent;border:1.5px solid #33699c;box-sizing:border-box;"></div>
<div class="t" style="left:385px;top:78.8px;font-size:11px;color:#000;transform:scaleX(0.9804);transform-origin:0 0;">30.0</div>
<div class="abs" style="left:435.9px;top:74.60000000000001px;width:104.0px;height:20px;background:transparent;border:1.5px solid #33699c;box-sizing:border-box;"></div>
<div class="t" style="left:439.20000000000005px;top:78.8px;font-size:11px;color:#000;transform:scaleX(0.9324);transform-origin:0 0;">Left lower corner</div>
<div class="t" style="left:6.199999999999989px;top:102.8px;font-size:11px;color:#000;">5</div>
<div class="abs" style="left:66.39999999999998px;top:106.2px;width:13px;height:6.2px;background:transparent;border:1.5px solid #2f6fe6;border-radius:1px;box-sizing:border-box;"></div>
<div class="t" style="left:86.39999999999998px;top:102.8px;font-size:11px;color:#000;transform:scaleX(0.9002);transform-origin:0 0;">Table field</div>
<div class="abs" style="left:178px;top:98.60000000000001px;width:145.39999999999998px;height:20px;background:transparent;border:1.5px solid #33699c;box-sizing:border-box;"></div>
<div class="t" style="left:182.60000000000002px;top:102.8px;font-size:11px;color:#000;transform:scaleX(0.9537);transform-origin:0 0;">Table #5, Zone #1</div>
<div class="abs" style="left:329.79999999999995px;top:98.60000000000001px;width:43.90000000000009px;height:20px;background:transparent;border:1.5px solid #33699c;box-sizing:border-box;"></div>
<div class="t" style="left:333.9px;top:102.8px;font-size:11px;color:#000;transform:scaleX(0.9991);transform-origin:0 0;">90.0</div>
<div class="abs" style="left:380.20000000000005px;top:98.60000000000001px;width:49.19999999999993px;height:20px;background:transparent;border:1.5px solid #33699c;box-sizing:border-box;"></div>
<div class="t" style="left:385px;top:102.8px;font-size:11px;color:#000;transform:scaleX(0.9804);transform-origin:0 0;">30.0</div>
<div class="abs" style="left:435.9px;top:98.60000000000001px;width:104.0px;height:20px;background:transparent;border:1.5px solid #33699c;box-sizing:border-box;"></div>
<div class="t" style="left:439.20000000000005px;top:102.8px;font-size:11px;color:#000;transform:scaleX(0.9324);transform-origin:0 0;">Left lower corner</div>
<div class="t" style="left:6.199999999999989px;top:126.8px;font-size:11px;color:#000;">6</div>
<div class="abs" style="left:66.39999999999998px;top:130.20000000000002px;width:13px;height:6.2px;background:transparent;border:1.5px solid #2f6fe6;border-radius:1px;box-sizing:border-box;"></div>
<div class="t" style="left:86.39999999999998px;top:126.8px;font-size:11px;color:#000;transform:scaleX(0.9002);transform-origin:0 0;">Table field</div>
<div class="abs" style="left:178px;top:122.60000000000001px;width:145.39999999999998px;height:20px;background:transparent;border:1.5px solid #33699c;box-sizing:border-box;"></div>
<div class="t" style="left:182.60000000000002px;top:126.8px;font-size:11px;color:#000;transform:scaleX(0.9537);transform-origin:0 0;">Table #6, Zone #1</div>
<div class="abs" style="left:329.79999999999995px;top:122.60000000000001px;width:43.90000000000009px;height:20px;background:transparent;border:1.5px solid #33699c;box-sizing:border-box;"></div>
<div class="t" style="left:333.9px;top:126.8px;font-size:11px;color:#000;transform:scaleX(0.9991);transform-origin:0 0;">90.0</div>
<div class="abs" style="left:380.20000000000005px;top:122.60000000000001px;width:49.19999999999993px;height:20px;background:transparent;border:1.5px solid #33699c;box-sizing:border-box;"></div>
<div class="t" style="left:385px;top:126.8px;font-size:11px;color:#000;transform:scaleX(0.9804);transform-origin:0 0;">30.0</div>
<div class="abs" style="left:435.9px;top:122.60000000000001px;width:104.0px;height:20px;background:transparent;border:1.5px solid #33699c;box-sizing:border-box;"></div>
<div class="t" style="left:439.20000000000005px;top:126.8px;font-size:11px;color:#000;transform:scaleX(0.9324);transform-origin:0 0;">Left lower corner</div>
<div class="t" style="left:6.199999999999989px;top:150.8px;font-size:11px;color:#000;">7</div>
<div class="abs" style="left:66.39999999999998px;top:154.20000000000002px;width:13px;height:6.2px;background:transparent;border:1.5px solid #2f6fe6;border-radius:1px;box-sizing:border-box;"></div>
<div class="t" style="left:86.39999999999998px;top:150.8px;font-size:11px;color:#000;transform:scaleX(0.9002);transform-origin:0 0;">Table field</div>
<div class="abs" style="left:178px;top:146.6px;width:145.39999999999998px;height:20px;background:transparent;border:1.5px solid #33699c;box-sizing:border-box;"></div>
<div class="t" style="left:182.60000000000002px;top:150.8px;font-size:11px;color:#000;transform:scaleX(0.9537);transform-origin:0 0;">Table #7, Zone #1</div>
<div class="abs" style="left:329.79999999999995px;top:146.6px;width:43.90000000000009px;height:20px;background:transparent;border:1.5px solid #33699c;box-sizing:border-box;"></div>
<div class="t" style="left:333.9px;top:150.8px;font-size:11px;color:#000;transform:scaleX(0.9991);transform-origin:0 0;">90.0</div>
<div class="abs" style="left:380.20000000000005px;top:146.6px;width:49.19999999999993px;height:20px;background:transparent;border:1.5px solid #33699c;box-sizing:border-box;"></div>
<div class="t" style="left:385px;top:150.8px;font-size:11px;color:#000;transform:scaleX(0.9804);transform-origin:0 0;">30.0</div>
<div class="abs" style="left:435.9px;top:146.6px;width:104.0px;height:20px;background:transparent;border:1.5px solid #33699c;box-sizing:border-box;"></div>
<div class="t" style="left:439.20000000000005px;top:150.8px;font-size:11px;color:#000;transform:scaleX(0.9324);transform-origin:0 0;">Left lower corner</div>
<div class="t" style="left:6.199999999999989px;top:174.8px;font-size:11px;color:#000;">8</div>
<div class="abs" style="left:66.39999999999998px;top:178.20000000000002px;width:13px;height:6.2px;background:transparent;border:1.5px solid #2f6fe6;border-radius:1px;box-sizing:border-box;"></div>
<div class="t" style="left:86.39999999999998px;top:174.8px;font-size:11px;color:#000;transform:scaleX(0.9002);transform-origin:0 0;">Table field</div>
<div class="abs" style="left:178px;top:170.6px;width:145.39999999999998px;height:20px;background:transparent;border:1.5px solid #33699c;box-sizing:border-box;"></div>
<div class="t" style="left:182.60000000000002px;top:174.8px;font-size:11px;color:#000;transform:scaleX(0.9537);transform-origin:0 0;">Table #8, Zone #1</div>
<div class="abs" style="left:329.79999999999995px;top:170.6px;width:43.90000000000009px;height:20px;background:transparent;border:1.5px solid #33699c;box-sizing:border-box;"></div>
<div class="t" style="left:333.9px;top:174.8px;font-size:11px;color:#000;transform:scaleX(0.9991);transform-origin:0 0;">90.0</div>
<div class="abs" style="left:380.20000000000005px;top:170.6px;width:49.19999999999993px;height:20px;background:transparent;border:1.5px solid #33699c;box-sizing:border-box;"></div>
<div class="t" style="left:385px;top:174.8px;font-size:11px;color:#000;transform:scaleX(0.9804);transform-origin:0 0;">30.0</div>
<div class="abs" style="left:435.9px;top:170.6px;width:104.0px;height:20px;background:transparent;border:1.5px solid #33699c;box-sizing:border-box;"></div>
<div class="t" style="left:439.20000000000005px;top:174.8px;font-size:11px;color:#000;transform:scaleX(0.9324);transform-origin:0 0;">Left lower corner</div>
<div class="t" style="left:6.199999999999989px;top:198.8px;font-size:11px;color:#000;">9</div>
<div class="abs" style="left:66.39999999999998px;top:202.20000000000002px;width:13px;height:6.2px;background:transparent;border:1.5px solid #2f6fe6;border-radius:1px;box-sizing:border-box;"></div>
<div class="t" style="left:86.39999999999998px;top:198.8px;font-size:11px;color:#000;transform:scaleX(0.9002);transform-origin:0 0;">Table field</div>
<div class="abs" style="left:178px;top:194.6px;width:145.39999999999998px;height:20px;background:transparent;border:1.5px solid #33699c;box-sizing:border-box;"></div>
<div class="t" style="left:182.60000000000002px;top:198.8px;font-size:11px;color:#000;transform:scaleX(0.9537);transform-origin:0 0;">Table #9, Zone #1</div>
<div class="abs" style="left:329.79999999999995px;top:194.6px;width:43.90000000000009px;height:20px;background:transparent;border:1.5px solid #33699c;box-sizing:border-box;"></div>
<div class="t" style="left:333.9px;top:198.8px;font-size:11px;color:#000;transform:scaleX(0.9991);transform-origin:0 0;">90.0</div>
<div class="abs" style="left:380.20000000000005px;top:194.6px;width:49.19999999999993px;height:20px;background:transparent;border:1.5px solid #33699c;box-sizing:border-box;"></div>
<div class="t" style="left:385px;top:198.8px;font-size:11px;color:#000;transform:scaleX(0.9804);transform-origin:0 0;">30.0</div>
<div class="abs" style="left:435.9px;top:194.6px;width:104.0px;height:20px;background:transparent;border:1.5px solid #33699c;box-sizing:border-box;"></div>
<div class="t" style="left:439.20000000000005px;top:198.8px;font-size:11px;color:#000;transform:scaleX(0.9324);transform-origin:0 0;">Left lower corner</div>
<div class="t" style="left:6.600000000000023px;top:222.8px;font-size:11px;color:#000;transform:scaleX(0.9391);transform-origin:0 0;">10</div>
<div class="abs" style="left:66.39999999999998px;top:226.20000000000002px;width:13px;height:6.2px;background:transparent;border:1.5px solid #2f6fe6;border-radius:1px;box-sizing:border-box;"></div>
<div class="t" style="left:86.39999999999998px;top:222.8px;font-size:11px;color:#000;transform:scaleX(0.9002);transform-origin:0 0;">Table field</div>
<div class="abs" style="left:178px;top:218.6px;width:145.39999999999998px;height:20px;background:transparent;border:1.5px solid #33699c;box-sizing:border-box;"></div>
<div class="t" style="left:182.60000000000002px;top:222.8px;font-size:11px;color:#000;transform:scaleX(0.9544);transform-origin:0 0;">Table #10, Zone #1</div>
<div class="abs" style="left:329.79999999999995px;top:218.6px;width:43.90000000000009px;height:20px;background:transparent;border:1.5px solid #33699c;box-sizing:border-box;"></div>
<div class="t" style="left:333.9px;top:222.8px;font-size:11px;color:#000;transform:scaleX(0.9991);transform-origin:0 0;">90.0</div>
<div class="abs" style="left:380.20000000000005px;top:218.6px;width:49.19999999999993px;height:20px;background:transparent;border:1.5px solid #33699c;box-sizing:border-box;"></div>
<div class="t" style="left:385px;top:222.8px;font-size:11px;color:#000;transform:scaleX(0.9804);transform-origin:0 0;">30.0</div>
<div class="abs" style="left:435.9px;top:218.6px;width:104.0px;height:20px;background:transparent;border:1.5px solid #33699c;box-sizing:border-box;"></div>
<div class="t" style="left:439.20000000000005px;top:222.8px;font-size:11px;color:#000;transform:scaleX(0.9324);transform-origin:0 0;">Left lower corner</div>
<div class="t" style="left:6.600000000000023px;top:246.8px;font-size:11px;color:#000;letter-spacing:-0.460px;">11</div>
<div class="abs" style="left:66.39999999999998px;top:250.20000000000002px;width:13px;height:6.2px;background:transparent;border:1.5px solid #2f6fe6;border-radius:1px;box-sizing:border-box;"></div>
<div class="t" style="left:86.39999999999998px;top:246.8px;font-size:11px;color:#000;transform:scaleX(0.9002);transform-origin:0 0;">Table field</div>
<div class="abs" style="left:178px;top:242.6px;width:145.39999999999998px;height:20px;background:transparent;border:1.5px solid #33699c;box-sizing:border-box;"></div>
<div class="t" style="left:182.60000000000002px;top:246.8px;font-size:11px;color:#000;transform:scaleX(0.9628);transform-origin:0 0;">Table #11, Zone #1</div>
<div class="abs" style="left:329.79999999999995px;top:242.6px;width:43.90000000000009px;height:20px;background:transparent;border:1.5px solid #33699c;box-sizing:border-box;"></div>
<div class="t" style="left:333.9px;top:246.8px;font-size:11px;color:#000;transform:scaleX(0.9991);transform-origin:0 0;">90.0</div>
<div class="abs" style="left:380.20000000000005px;top:242.6px;width:49.19999999999993px;height:20px;background:transparent;border:1.5px solid #33699c;box-sizing:border-box;"></div>
<div class="t" style="left:385px;top:246.8px;font-size:11px;color:#000;transform:scaleX(0.9804);transform-origin:0 0;">30.0</div>
<div class="abs" style="left:435.9px;top:242.6px;width:104.0px;height:20px;background:transparent;border:1.5px solid #33699c;box-sizing:border-box;"></div>
<div class="t" style="left:439.20000000000005px;top:246.8px;font-size:11px;color:#000;transform:scaleX(0.9324);transform-origin:0 0;">Left lower corner</div>
<div class="t" style="left:6.600000000000023px;top:270.8px;font-size:11px;color:#000;transform:scaleX(0.9391);transform-origin:0 0;">12</div>
<div class="abs" style="left:66.39999999999998px;top:274.2px;width:13px;height:6.2px;background:transparent;border:1.5px solid #2f6fe6;border-radius:1px;box-sizing:border-box;"></div>
<div class="t" style="left:86.39999999999998px;top:270.8px;font-size:11px;color:#000;transform:scaleX(0.9002);transform-origin:0 0;">Table field</div>
<div class="abs" style="left:178px;top:266.59999999999997px;width:145.39999999999998px;height:20px;background:transparent;border:1.5px solid #33699c;box-sizing:border-box;"></div>
<div class="t" style="left:182.60000000000002px;top:270.8px;font-size:11px;color:#000;transform:scaleX(0.9544);transform-origin:0 0;">Table #12, Zone #1</div>
<div class="abs" style="left:329.79999999999995px;top:266.59999999999997px;width:43.90000000000009px;height:20px;background:transparent;border:1.5px solid #33699c;box-sizing:border-box;"></div>
<div class="t" style="left:333.9px;top:270.8px;font-size:11px;color:#000;transform:scaleX(0.9991);transform-origin:0 0;">90.0</div>
<div class="abs" style="left:380.20000000000005px;top:266.59999999999997px;width:49.19999999999993px;height:20px;background:transparent;border:1.5px solid #33699c;box-sizing:border-box;"></div>
<div class="t" style="left:385px;top:270.8px;font-size:11px;color:#000;transform:scaleX(0.9804);transform-origin:0 0;">30.0</div>
<div class="abs" style="left:435.9px;top:266.59999999999997px;width:104.0px;height:20px;background:transparent;border:1.5px solid #33699c;box-sizing:border-box;"></div>
<div class="t" style="left:439.20000000000005px;top:270.8px;font-size:11px;color:#000;transform:scaleX(0.9324);transform-origin:0 0;">Left lower corner</div>
<div class="t" style="left:6.600000000000023px;top:294.8px;font-size:11px;color:#000;transform:scaleX(0.9391);transform-origin:0 0;">13</div>
<div class="abs" style="left:66.39999999999998px;top:298.2px;width:13px;height:6.2px;background:transparent;border:1.5px solid #2f6fe6;border-radius:1px;box-sizing:border-box;"></div>
<div class="t" style="left:86.39999999999998px;top:294.8px;font-size:11px;color:#000;transform:scaleX(0.9002);transform-origin:0 0;">Table field</div>
<div class="abs" style="left:178px;top:290.59999999999997px;width:145.39999999999998px;height:20px;background:transparent;border:1.5px solid #33699c;box-sizing:border-box;"></div>
<div class="t" style="left:182.60000000000002px;top:294.8px;font-size:11px;color:#000;transform:scaleX(0.9544);transform-origin:0 0;">Table #13, Zone #1</div>
<div class="abs" style="left:329.79999999999995px;top:290.59999999999997px;width:43.90000000000009px;height:20px;background:transparent;border:1.5px solid #33699c;box-sizing:border-box;"></div>
<div class="t" style="left:333.9px;top:294.8px;font-size:11px;color:#000;transform:scaleX(0.9991);transform-origin:0 0;">90.0</div>
<div class="abs" style="left:380.20000000000005px;top:290.59999999999997px;width:49.19999999999993px;height:20px;background:transparent;border:1.5px solid #33699c;box-sizing:border-box;"></div>
<div class="t" style="left:385px;top:294.8px;font-size:11px;color:#000;transform:scaleX(0.9804);transform-origin:0 0;">30.0</div>
<div class="abs" style="left:435.9px;top:290.59999999999997px;width:104.0px;height:20px;background:transparent;border:1.5px solid #33699c;box-sizing:border-box;"></div>
<div class="t" style="left:439.20000000000005px;top:294.8px;font-size:11px;color:#000;transform:scaleX(0.9324);transform-origin:0 0;">Left lower corner</div>
</div>
<div class="abs" style="left:970px;top:239.4px;width:14.7px;height:291.4px;background:#f1f1f1;"></div>
<div class="abs" style="left:970px;top:255.7px;width:14.7px;height:105.1px;background:#c1c1c1;"></div>
<svg style="left:970px;top:240px" width="15" height="291" viewBox="970 240 15 291"><path d="M974.300 249.700 L977.400 246.500 L980.500 249.700 M974.300 522.500 L977.400 525.700 L980.500 522.500" stroke="#8e8e8e" stroke-width="1.150" fill="none"/></svg>
<div class="abs" style="left:746.9px;top:241.6px;width:103.6px;height:21.2px;background:#fff;border:2px solid #2c58a4;border-radius:3.5px;box-sizing:border-box;"></div>
<div class="abs" style="left:748.9px;top:243.8px;width:83.4px;height:16.3px;background:#0078d7;outline:1px dotted #f2c38a;outline-offset:-1px;"></div>
<div class="t" style="left:750.7px;top:245.8px;font-size:11px;color:#fff;transform:scaleX(0.9263);transform-origin:0 0;">Left lower corner</div>
<svg style="left:834px;top:246px" width="16" height="12" viewBox="834 246 16 12"><path d="M836.600 249.400 L841.800 254.300 L847 249.400" stroke="#8a8a8a" stroke-width="1.100" fill="none"/></svg>
<div class="abs" style="left:746.9px;top:263.2px;width:104px;height:110.60000000000002px;background:#fff;border:1px solid #767676;box-sizing:border-box;"></div>
<div class="t" style="left:749.3px;top:264.55px;font-size:11.5px;color:#000;transform:scaleX(0.8831);transform-origin:0 0;">Left lower corner</div>
<div class="t" style="left:749.3px;top:279.55px;font-size:11.5px;color:#000;transform:scaleX(0.8730);transform-origin:0 0;">Lower center</div>
<div class="t" style="left:749.3px;top:295.55px;font-size:11.5px;color:#000;transform:scaleX(0.8716);transform-origin:0 0;">Right lower corner</div>
<div class="t" style="left:749.3px;top:311.55px;font-size:11.5px;color:#000;transform:scaleX(0.8876);transform-origin:0 0;">Left upper corner</div>
<div class="t" style="left:749.3px;top:326.55px;font-size:11.5px;color:#000;transform:scaleX(0.8730);transform-origin:0 0;">Upper center</div>
<div class="t" style="left:749.3px;top:342.55px;font-size:11.5px;color:#000;transform:scaleX(0.8760);transform-origin:0 0;">Right upper corner</div>
<div class="abs" style="left:748px;top:357.9px;width:102.3px;height:15.9px;background:#0078d7;outline:1px dotted #e8b070;outline-offset:-1px;"></div>
<div class="t" style="left:749.3px;top:357.55px;font-size:11.5px;color:#fff;transform:scaleX(0.8700);transform-origin:0 0;">Rectangle center</div>
<svg style="left:730px;top:345px" width="140" height="45" viewBox="730 345 140 45"><rect x="739.900" y="355" width="122.100" height="26.600" rx="7.500" ry="7.500" fill="none" stroke="#fa0010" stroke-width="3.800"/></svg>
<svg style="left:825px;top:358px" width="20" height="26" viewBox="825 358 20 26">
<path d="M829.400 362.300 L829.400 376.900 L832.700 373.900 L835.200 379.600 L837.500 378.600 L835 373.100 L839.400 372.800 Z" fill="#fff" stroke="#222" stroke-width="0.800" stroke-linejoin="round"/>
</svg>
<div class="t" style="left:308.9px;top:540.55px;font-size:11.5px;color:#000;transform:scaleX(0.8668);transform-origin:0 0;">30 objects selected</div>
<div class="abs" style="left:308.4px;top:557.4px;width:113px;height:34px;background:#d6d6d6;border:1px solid #a3a3a3;border-radius:2.5px;box-sizing:border-box;box-shadow:0.5px 1px 0 #8f8f8f;"></div>
<svg style="left:338px;top:560px" width="26" height="28" viewBox="338 560 26 28">
<path d="M341 563.800 H352 L357.500 569 V584.600 H341 Z" fill="#f3f3f3" stroke="#c9c9c9" stroke-width="0.900"/>
<path d="M352 563.800 V569 H357.500 Z" fill="#d9d9d9"/>
<path d="M350 574.300 H354.600 V572 L360.300 577.100 L354.600 582.200 V579.900 H350 Z" fill="#cf0008"/>
</svg>
<div class="t" style="left:363.3px;top:569.55px;font-size:11.5px;color:#000;transform:scaleX(0.9217);transform-origin:0 0;">Export</div>
<div class="abs" style="left:858.4px;top:557.4px;width:128px;height:34px;background:#d6d6d6;border:1px solid #a3a3a3;border-radius:2.5px;box-sizing:border-box;box-shadow:0.5px 1px 0 #8f8f8f;"></div>
<svg style="left:896px;top:562px" width="24" height="25" viewBox="896 562 24 25">
<path d="M904.800 570.500 V566.200 H916 V582.800 H904.800 V578.500" stroke="#222" stroke-width="1.700" fill="none"/>
<path d="M899.500 574.500 H908" stroke="#76b041" stroke-width="1.500" fill="none"/>
<path d="M907.300 570.700 L913.600 574.500 L907.300 578.300 Z" fill="#76b041"/>
</svg>
<div class="t" style="left:923.2px;top:569.55px;font-size:11.5px;color:#000;transform:scaleX(0.8413);transform-origin:0 0;">Close</div>
</body>
</html>
